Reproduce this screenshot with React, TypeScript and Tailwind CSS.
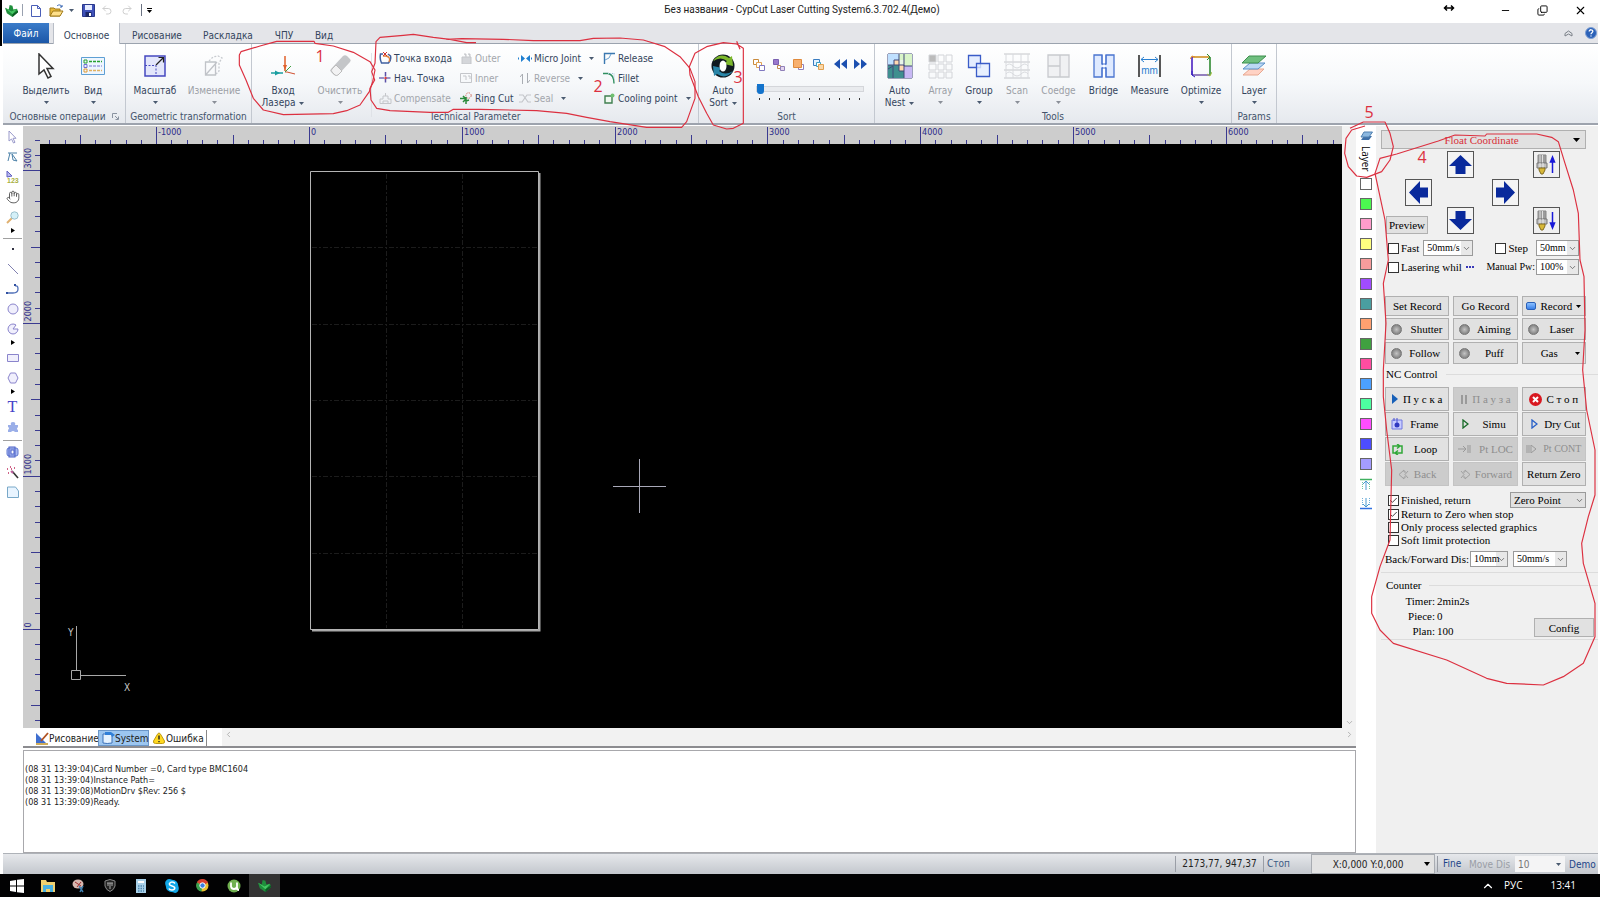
import type { ReactNode } from "react";
import { Check, ChevronDown, ChevronLeft, ChevronRight, ChevronUp, Copy, Minus, Undo2, Redo2, X, Hand } from "lucide-react";

const UI = "font-['DejaVu_Sans_Condensed','DejaVu_Sans',sans-serif]";
const PANEL = "font-['Liberation_Serif',serif]";

function Svg({ w, h, vb, children }: { w: number; h: number; vb?: string; children: ReactNode }) {
  return (
    <svg width={w} height={h} viewBox={vb ?? `0 0 ${w} ${h}`} fill="none" className="shrink-0" aria-hidden="true">
      {children}
    </svg>
  );
}

function Caret({ color = "#4a5a70" }: { color?: string }) {
  return (
    <Svg w={5} h={3}>
      <path d="M0 0h5L2.5 3z" fill={color} />
    </Svg>
  );
}

/* ---------- title bar ---------- */

function AppLogo({ size = 14 }: { size?: number }) {
  return (
    <Svg w={size} h={size} vb="0 0 14 14">
      <path d="M0 4l4 2 1-5 3 1 1 4 4-1 1 4-6 5-6-4z" fill="#1f8f3c" />
      <path d="M0 4l7 4 6-3-5 6z" fill="#46c864" />
      <path d="M8 11l6-4v2l-6 5z" fill="#0b5c22" />
    </Svg>
  );
}

function TitleBar() {
  return (
    <header className="flex h-[23px] shrink-0 items-center bg-white pb-[3px] pl-[2px]">
      <AppLogo size={13} />
      <span className="ml-1 h-3 w-px bg-gray-400" />
      <button aria-label="New" className="ml-2 w-[10px]">
        <Svg w={10} h={13}>
          <path d="M.5 1.5h6l3 3v8h-9z" fill="#fff" stroke="#4a5fb8" />
          <path d="M6.5 1.5v3h3" stroke="#4a5fb8" />
        </Svg>
      </button>
      <button aria-label="Open" className="ml-2 w-[15px]">
        <Svg w={15} h={13}>
          <path d="M1 4h4l1 1h5v7H1z" fill="#e8b93a" stroke="#a07a18" />
          <path d="M1 12l3-5h10l-3 5z" fill="#ffe08a" stroke="#a07a18" />
          <path d="M8 2c2-2 4-1 5 1m0-2v2h-2" stroke="#3060b0" />
        </Svg>
      </button>
      <button aria-label="Open recent" className="ml-[5px]"><Caret /></button>
      <button aria-label="Save" className="ml-2 w-[13px]">
        <Svg w={13} h={13}>
          <path d="M.5.5h12v12h-12z" fill="#3f51b8" stroke="#2a388c" />
          <path d="M3 1h7v5H3z" fill="#e6ecff" />
          <path d="M3.5 8h6v5h-6z" fill="#1c2766" />
          <path d="M7 9h2v3H7z" fill="#fff" />
        </Svg>
      </button>
      <button aria-label="Undo" disabled className="ml-[6px]"><Undo2 size={12} color="#cfcfcf" /></button>
      <button aria-label="Redo" disabled className="ml-2"><Redo2 size={12} color="#cfcfcf" /></button>
      <span className="ml-2 h-3 w-px bg-gray-500" />
      <button aria-label="Customize" className="ml-[5px] flex flex-col items-center gap-px">
        <span className="h-px w-[5px] bg-black" />
        <Caret color="#000" />
      </button>
      <h1 className="flex-1 pr-[48px] text-center font-['Roboto',sans-serif] text-[10px] leading-3 text-[#222]">
        Без названия - CypCut Laser Cutting System6.3.702.4(Демо)
      </h1>
      <div className="flex items-center gap-[26px] pr-[11px] text-black">
        <button aria-label="Minimize"><Minus size={11} strokeWidth={2} /></button>
        <button aria-label="Restore"><Copy size={11} strokeWidth={2} className="-scale-x-100 rotate-180" /></button>
        <button aria-label="Close"><X size={13} strokeWidth={2} /></button>
      </div>
    </header>
  );
}

function MenuTabs() {
  return (
    <nav className={`${UI} flex h-[21px] shrink-0 items-stretch border-b border-[#9ba3ae] bg-[#e4e5e9] text-[10px] text-[#33445c]`}>
      <button className="w-[46px] bg-gradient-to-b from-[#3b7cc9] to-[#1b57a8] text-white">Файл</button>
      <button className="-mb-px ml-1 w-[67px] border-x border-[#b9bec7] bg-white pt-1">Основное</button>
      <button className="ml-2 w-[58px] pt-1">Рисование</button>
      <button className="ml-3 w-[60px] pt-1">Раскладка</button>
      <button className="ml-3 w-7 pt-1">ЧПУ</button>
      <button className="ml-3 w-7 pt-1">Вид</button>
      <div className="ml-auto flex items-center gap-3 pr-px">
        <button aria-label="Collapse ribbon">
          <Svg w={9} h={7}><path d="M1 3.5L4.5 1 8 3.5V6L4.5 4 1 6z" stroke="#7a8088" /></Svg>
        </button>
        <button aria-label="Help">
          <Svg w={12} h={12}>
            <circle cx="6" cy="6" r="5.5" fill="#2c62b8" stroke="#7d9fd4" />
            <path d="M4.2 4.5c0-2.4 3.8-2.2 3.6 0C7.7 5.7 6 5.7 6 7.2M6 8.4v1.2" stroke="#fff" strokeWidth="1.3" />
          </Svg>
        </button>
      </div>
    </nav>
  );
}

/* ---------- ribbon ---------- */

function BigButton({ icon, label, second, width, disabled, caret = true }: {
  icon: ReactNode; label: string; second?: string; width: string; disabled?: boolean; caret?: boolean;
}) {
  return (
    <button disabled={disabled} className={`flex shrink-0 flex-col items-center ${width} ${disabled ? "text-[#9b9fa6]" : "text-[#33445c]"}`}>
      <span className="flex h-[26px] items-center">{icon}</span>
      <span className="mt-[6px] whitespace-nowrap leading-3">{label}</span>
      {second ? (
        <span className="flex items-center gap-1 whitespace-nowrap leading-3">{second}<Caret /></span>
      ) : (
        caret && <span className="mt-1 flex"><Caret color={disabled ? "#8a8f98" : undefined} /></span>
      )}
    </button>
  );
}

function SmallButton({ icon, label, disabled, caret }: { icon: ReactNode; label: string; disabled?: boolean; caret?: boolean }) {
  return (
    <button disabled={disabled} className={`flex h-5 items-center whitespace-nowrap ${disabled ? "text-[#a3a6ac]" : "text-[#33445c]"}`}>
      <span className="mr-[2px] flex w-[14px] justify-center">{icon}</span>
      {label}
      {caret && <span className="ml-2"><Caret /></span>}
    </button>
  );
}

function Group({ label, width, children, corner }: { label: string; width: string; children: ReactNode; corner?: boolean }) {
  return (
    <section aria-label={label} className={`flex shrink-0 flex-col border-r border-[#c3c8d0] ${width}`}>
      <div className="flex h-[66px] items-start pt-[9px]">{children}</div>
      <div className="flex items-center leading-[13px] text-[#43536b]">
        <span className="flex-1 whitespace-nowrap text-center">{label}</span>
        {corner && (
          <button aria-label="More" className="mr-[6px]">
            <Svg w={7} h={7}><path d="M.5 5V.5H5M3 3l3 3M6.5 3.5v3h-3" stroke="#8a93a0" /></Svg>
          </button>
        )}
      </div>
    </section>
  );
}

const squares = (a: string, b: string, c: string) => (
  <Svg w={13} h={13}>
    <path d="M1.5 1.5h5v5h-5z" fill={a} stroke="#c98a3c" />
    <path d="M4.5 4.5h5v5h-5z" fill={b} stroke="#e0a050" />
    <path d="M7.5 7.5h5v5h-5z" fill={c} stroke="#8078c0" />
  </Svg>
);

function SortInnerIcon() {
  return (
    <Svg w={13} h={13}>
      <path d="M1.5 1.5h5v5h-5z" fill="#9a78cc" stroke="#7a60b0" />
      <path d="M5.5 7.5h3v3h-3z" fill="#fff" stroke="#c08a50" />
      <path d="M8.5 8.5h4v4h-4z" fill="#e4d4f0" stroke="#9080b8" />
    </Svg>
  );
}
function FrontIcon() {
  return (
    <Svg w={13} h={13}>
      <path d="M6.5 6.5h5v5h-5z" fill="#fff" stroke="#9080b8" />
      <path d="M1.5 1.5h8v8h-8z" fill="#f7b070" stroke="#e08a3c" />
    </Svg>
  );
}
function BackIcon() {
  return (
    <Svg w={13} h={13}>
      <path d="M1.5 1.5h6v6h-6z" fill="#e4f2ff" stroke="#3a7cc0" />
      <path d="M4.5 4.5h4v4h-4z" fill="#fff" stroke="#40a0c0" />
      <path d="M6.5 6.5h5v5h-5z" fill="#fbd8a8" stroke="#e0a050" />
    </Svg>
  );
}

function Ribbon() {
  const g = "#a9adb3";
  return (
    <div className={`${UI} flex h-[81px] shrink-0 border-b-2 border-[#9da3ad] bg-gradient-to-b from-white via-[#f6f8fa] to-[#e6e9ee] text-[10px]`}>
      <Group label="Основные операции" width="w-[123px]" corner>
        <div className="flex pl-[11px]">
          <BigButton width="w-[64px]" label="Выделить" icon={
            <Svg w={18} h={27}>
              <path d="M2 1v20l5-4 4 8 3-1.5-4-8h6z" fill="#fff" stroke="#333" strokeWidth="1.5" />
            </Svg>} />
          <BigButton width="w-[30px]" label="Вид" icon={
            <Svg w={24} h={18}>
              <path d="M.5.5h23v17H.5z" fill="#eef6ff" stroke="#5d9fd4" />
              <path d="M3 3h3v3H3z" stroke="#2aa030" /><path d="M3 7.5h3v3H3z" stroke="#7070d0" /><path d="M3 12h3v3H3z" stroke="#e09a30" />
              <path d="M8 4.5h13" stroke="#2aa030" strokeDasharray="3 1" strokeWidth="1.5" />
              <path d="M8 9h13" stroke="#a0a0e0" strokeDasharray="3 1" strokeWidth="1.5" />
              <path d="M8 13.5h13" stroke="#e0b060" strokeDasharray="3 1" strokeWidth="1.5" />
            </Svg>} />
        </div>
      </Group>
      <Group label="Geometric transformation" width="w-[126px]">
        <div className="flex gap-1 pl-1">
          <BigButton width="w-[50px]" label="Масштаб" icon={
            <Svg w={22} h={22}>
              <path d="M1 1h20v20H1z" fill="#e3e6fb" stroke="#4648c0" strokeWidth="1.5" />
              <path d="M1 10.5h11V21" stroke="#4648c0" strokeDasharray="2 1.5" />
              <path d="M12 10l7-7M14.5 2.5h5v5" stroke="#222" strokeWidth="1.2" />
            </Svg>} />
          <BigButton width="w-[60px]" label="Изменение" disabled icon={
            <Svg w={20} h={22}>
              <path d="M1.5 7h10v13h-10zM1.5 20L13 7" stroke="#c0c3c8" strokeWidth="1.3" />
              <path d="M5 6l4-4 5-1 4 2-3 5v8l-3 3" stroke="#c8cbd0" strokeDasharray="2 1.5" strokeWidth="1.3" />
            </Svg>} />
        </div>
      </Group>
      <Group label="Technical Parameter" width="w-[447px]">
        <div className="flex h-[64px] gap-[7px] border-r border-[#dfe2e7] pl-[6px] pr-[6px]">
          <BigButton width="w-[50px]" label="Вход" second="Лазера" icon={
            <Svg w={25} h={22}>
              <path d="M14 1v15" stroke="#e0602a" strokeWidth="1.5" /><path d="M12 10l2 5 2-5z" fill="#e0602a" />
              <path d="M0 18h12" stroke="#1a9ea0" strokeWidth="1.5" /><path d="M4 15.5L9 18l-5 2.500z" fill="#1a9ea0" />
              <path d="M14 17h2l8 2" stroke="#d05030" /><path d="M14 17l6-6" stroke="#40a040" />
            </Svg>} />
          <BigButton width="w-[50px]" label="Очистить" disabled icon={
            <Svg w={24} h={24}>
              <path d="M3 15L15 2q2-1.500 4 0l3 3q1.500 1.500 0 3L10 21q-2 1.500-4 0l-3-3q-1.500-1.500 0-3z" fill="#c4c6c9" />
              <path d="M4 15l4-4 6 6-4 4q-2 1-3 0l-3-3q-1.500-1.500 0-3z" fill="#f2f2f3" stroke="#bbb" />
            </Svg>} />
        </div>
        <div className="-mt-[5px] grid grid-cols-[81px_59px_84px_90px] pl-[6px]">
          <SmallButton label="Точка входа" icon={<Svg w={13} h={12}><path d="M4 2H1.500q-1 5 1 9h7q3-3 2-7L9 2" stroke="#4060a0" strokeWidth="1.500" /><path d="M4 4h3q5 1 3 6" stroke="#e0803a" strokeWidth="1.300" /><path d="M4 0l4 4m0-4L4 4" stroke="#d03030" /></Svg>} />
          <SmallButton disabled label="Outer" icon={<Svg w={11} h={11}><path d="M1 4h9v7H1zM3 1h2v3M7 1h2v3" fill="#d4d6da" stroke="#c4c6ca" /></Svg>} />
          <SmallButton caret label="Micro Joint" icon={<Svg w={14} h={7}><path d="M0 3.500h1M13 3.500h1" stroke="#1f7fd0" strokeWidth="2" /><path d="M7 3.500L3 0v7zM8 3.500L12 0v7z" fill="#1f7fd0" /></Svg>} />
          <SmallButton label="Release" icon={<Svg w={12} h={12}><path d="M1.500 12V1.500H12" stroke="#3a78b0" strokeWidth="1.400" /><path d="M2 8q5-1 6-6" stroke="#6aa0d0" /></Svg>} />
          <SmallButton label="Нач. Точка" icon={<Svg w={13} h={12}><path d="M0 6h13" stroke="#7a70b8" strokeWidth="1.500" strokeDasharray="5 1.500" /><path d="M6.500 0v12" stroke="#5b50a8" strokeWidth="1.500" strokeDasharray="4.500 1.500" /><circle cx="6.500" cy="6" r="1.200" fill="#e04040" /></Svg>} />
          <SmallButton disabled label="Inner" icon={<Svg w={12} h={10}><path d="M.5.500h11v9H.500zM3 3h3v4M8 3h2v3" stroke="#c4c6ca" /></Svg>} />
          <SmallButton disabled caret label="Reverse" icon={<Svg w={10} h={11}><path d="M2.500 11V1L0 4M7.500 0v10L10 7" stroke={g} /></Svg>} />
          <SmallButton label="Fillet" icon={<Svg w={12} h={12}><path d="M0 1.500h5q6 1 6 10" stroke="#2f8f5f" strokeWidth="1.400" /><path d="M5 1.500h6v6" stroke="#a8c8d8" strokeDasharray="1 1" /></Svg>} />
          <SmallButton disabled label="Compensate" icon={<Svg w={13} h={11}><path d="M1 10.500V6h3V3h5v3h3v4.500zM4 10V8h5v2M6.500 3V0" stroke="#c4c6ca" /></Svg>} />
          <SmallButton label="Ring Cut" icon={<Svg w={13} h={12}><circle cx="8.500" cy="3.500" r="2.700" stroke="#d07060" strokeDasharray="1.500 1" /><path d="M6 12V5M0 6.500h5M3 4l3 3-3 3M6 9l3-1" stroke="#2a8a3a" strokeWidth="1.500" /></Svg>} />
          <SmallButton disabled caret label="Seal" icon={<Svg w={12} h={9}><path d="M0 1h4l5 7h3M12 1H8L3 8H0" stroke="#c4c6ca" strokeWidth="1.200" /></Svg>} />
          <SmallButton caret label="Cooling point" icon={<Svg w={11} h={11}><path d="M1 3h7v7H1z" fill="#f0f8f0" stroke="#3f7f4f" strokeWidth="1.400" /><circle cx="8.500" cy="2.500" r="2" fill="#6fc070" /></Svg>} />
        </div>
      </Group>
      <Group label="Sort" width="w-[176px]">
        <BigButton width="w-[48px]" label="Auto" second="Sort" icon={
          <Svg w={24} h={24}>
            <circle cx="12" cy="12" r="11.500" fill="#101a20" />
            <path d="M2 7Q9-2 18 4l3-2 1 10-9-2 3-3Q10 2 2 7z" fill="#7cb82c" />
            <path d="M22 17q-7 9-16 3l-3 2-1-10 9 2-3 3q6 5 14 0z" fill="#2a86a8" />
            <ellipse cx="12" cy="12" rx="3.500" ry="5.500" fill="#fff" />
          </Svg>} />
        <div className="ml-[9px] flex flex-col">
          <div className="-ml-1 flex h-[22px] items-center gap-[7px]">
            <button aria-label="Sort outer">{squares("#fff", "#fff", "#fff")}</button>
            <button aria-label="Sort inner"><SortInnerIcon /></button>
            <button aria-label="Bring forward"><FrontIcon /></button>
            <button aria-label="Send back"><BackIcon /></button>
            <button aria-label="Previous" className="ml-[2px]"><Svg w={13} h={10}><path d="M6 0v10L0 5zM13 0v10L7 5z" fill="#1c50b0" /></Svg></button>
            <button aria-label="Next"><Svg w={13} h={10}><path d="M0 0v10l6-5zM7 0v10l6-5z" fill="#1c50b0" /></Svg></button>
          </div>
          <input
            type="range" aria-label="Sort position" min={0} max={100} defaultValue={0}
            className="mt-[9px] h-[10px] w-[108px] appearance-none bg-transparent [&::-webkit-slider-runnable-track]:h-[6px] [&::-webkit-slider-runnable-track]:border [&::-webkit-slider-runnable-track]:border-[#d4d6da] [&::-webkit-slider-runnable-track]:bg-[#e9ebee] [&::-webkit-slider-thumb]:-mt-[3px] [&::-webkit-slider-thumb]:h-[10px] [&::-webkit-slider-thumb]:w-[7px] [&::-webkit-slider-thumb]:appearance-none [&::-webkit-slider-thumb]:rounded-b-[3px] [&::-webkit-slider-thumb]:bg-[#1474cc]"
          />
          <div className="mt-1 flex w-[104px] justify-between pl-[3px]">
            {Array.from({ length: 11 }, (_, i) => <span key={i} className="h-[2px] w-px bg-[#333]" />)}
          </div>
        </div>
      </Group>
      <Group label="Tools" width="w-[357px]">
        <div className="flex pl-1">
          <BigButton width="w-[41px]" label="Auto" second="Nest" icon={
            <Svg w={26} h={26}>
              <path d="M1 1h24v24H1z" fill="#e8f4e8" stroke="#404878" />
              <path d="M1 1h11v6H7v5H1z" fill="#bfe0ff" /><path d="M12 1h13v12h-8V7h-5z" fill="#d8f4c8" />
              <path d="M1 12h11v6h5v7H1z" fill="#3f8f8f" /><path d="M7 7h5v5h5v6h-5v-6H7z" fill="#ffd9b0" />
              <path d="M17 13h8v12h-8z" fill="#c8b8f4" />
              <path d="M1 12h11V7m0 5h5v6h-5m0-6v6m5-17v12h8m-8 5v7M12 1v6H7v5m-6 4l5-3v12" stroke="#404878" />
            </Svg>} />
          <BigButton width="w-[41px]" label="Array" disabled icon={
            <Svg w={25} h={25}><path d="M1 1h7v7H1z" fill="#bbb" /><path d="M1 1h7v7H1zM10 1h6v7h-6zM18 1h6v7h-6zM1 10h7v6H1zM10 10h6v6h-6zM18 10h6v6h-6zM1 18h7v6H1zM10 18h6v6h-6zM18 18h6v6h-6z" stroke="#d2d4d8" /></Svg>} />
          <BigButton width="w-[36px]" label="Group" icon={
            <Svg w={24} h={24}><path d="M1.500 1.500h12v12h-12z" fill="#e4edff" stroke="#3a5cc8" strokeWidth="1.300" /><path d="M9.500 9.500h13v13h-13z" fill="#e4edff" fillOpacity=".8" stroke="#3a5cc8" strokeWidth="1.300" /></Svg>} />
          <BigButton width="w-[40px]" label="Scan" disabled icon={
            <Svg w={26} h={26}><path d="M0 1h26M0 9h26M0 17h26M0 25h26" stroke="#c4c6ca" /><path d="M2 1v24M9 1v24M17 1v24M24 1v24M2 13q3-4 7 0t8 0 7 0M2 21q3-4 7 0t8 0 7 0" stroke="#d8dade" /></Svg>} />
          <BigButton width="w-[43px]" label="Coedge" disabled icon={
            <Svg w={23} h={24}><path d="M1 1h21v22H1zM13 1v22M1 12h12" fill="#f0f1f3" stroke="#c8cace" strokeWidth="1.300" /></Svg>} />
          <BigButton width="w-[47px]" label="Bridge" caret={false} icon={
            <Svg w={22} h={24}><path d="M1 1h8v9h4V1h8v22h-8v-9H9v9H1z" fill="#dfeaff" stroke="#4a74d0" strokeWidth="1.300" /><path d="M11 1v22" stroke="#fff" strokeWidth="2" /><path d="M9 1v9h4V1M9 23v-9h4v9" stroke="#4a74d0" /></Svg>} />
          <BigButton width="w-[45px]" label="Measure" caret={false} icon={
            <Svg w={23} h={24}><path d="M1 1v22M22 1v22" stroke="#222" strokeWidth="1.500" /><path d="M3 5.500h17M6 3L3 5.500 6 8M17 3l3 2.500L17 8" stroke="#2a80d0" /><text x="11.500" y="20" fontSize="10" textAnchor="middle" fill="#2a80d0" fontFamily="Liberation Sans">mm</text></Svg>} />
          <BigButton width="w-[58px]" label="Optimize" icon={
            <Svg w={22} h={24}><path d="M2 3h18" stroke="#d09020" strokeWidth="1.600" /><path d="M20 3v18" stroke="#2f8a30" strokeWidth="1.600" /><path d="M20 21H2" stroke="#7a60b0" strokeWidth="1.600" /><path d="M2 21V3" stroke="#4a20c0" strokeWidth="1.600" /><path d="M0 5l2-3 3 1" stroke="#e09030" /><path d="M17 0l3 3-3 3" stroke="#2f8a30" /><path d="M22 18l-2 4-3-2" stroke="#a0c040" /><path d="M5 23l-3-2v-4" stroke="#3020c0" /></Svg>} />
        </div>
      </Group>
      <Group label="Params" width="w-[45px]">
        <BigButton width="w-[44px]" label="Layer" icon={
          <Svg w={26} h={22}>
            <path d="M2 20l7-6h14l-6 6z" fill="#ffd2c4" stroke="#e8a890" /><path d="M2 14l7-6h15l-7 6z" fill="#bcd8f4" stroke="#5a90c8" />
            <path d="M1 8l7-7h17l-8 7z" fill="#6fbf7f" stroke="#3f8f4f" />
          </Svg>} />
      </Group>
    </div>
  );
}

/* ---------- left tool strip ---------- */

function Tool({ label, children }: { label: string; children: ReactNode }) {
  return <button aria-label={label} className="flex h-5 w-full shrink-0 items-center justify-center">{children}</button>;
}
function Flyout() {
  return <span className="mb-[3px] flex h-[6px] shrink-0 items-center justify-center"><Svg w={4} h={5}><path d="M0 0l4 2.500L0 5z" fill="#000" /></Svg></span>;
}

function ToolStrip() {
  const v = "#8a84cc";
  return (
    <aside className="flex w-5 shrink-0 flex-col bg-white pr-px pt-px">
      <Tool label="Select"><Svg w={9} h={14}><path d="M1 1v10l2.500-2 2 4 1.500-.7-2-4H8z" fill="#fff" stroke="#9a9acb" /></Svg></Tool>
      <Tool label="Edit node"><Svg w={12} h={12}><path d="M1 2h9M3 2q-1 4-2 8M5 3l5 7-4-1z" stroke="#4a80a8" /></Svg></Tool>
      <Tool label="Order"><Svg w={13} h={14}><path d="M1 1l5 5-5 1z" fill="#b8b8f0" stroke="#6060c0" /><text x="1" y="13" fontSize="7" fontWeight="bold" fill="#a8b040" fontFamily="Liberation Sans">123</text></Svg></Tool>
      <Tool label="Pan"><Hand size={14} color="#555" strokeWidth={1.6} /></Tool>
      <Tool label="Zoom"><Svg w={13} h={13}><path d="M1 12l5-5" stroke="#e0b070" strokeWidth="2" /><circle cx="8.500" cy="4.500" r="3.700" fill="#d4f0f8" stroke="#9ac0cc" /></Svg></Tool>
      <Flyout />
      <span className="mt-[2px] h-px w-full shrink-0 bg-[#a0a0a0]" />
      <Tool label="Point"><span className="size-[2px] bg-[#334]" /></Tool>
      <Tool label="Line"><Svg w={12} h={12}><path d="M1 1l10 10" stroke="#8080b0" /></Svg></Tool>
      <Tool label="Polyline"><Svg w={13} h={10}><path d="M1 9h6q5 0 5-4t-3-3" stroke="#5070b8" strokeWidth="1.300" /><path d="M0 8h2v2H0zM8 0h2v2H8z" fill="#3050a0" /></Svg></Tool>
      <Tool label="Circle"><Svg w={12} h={12}><circle cx="6" cy="6" r="5" fill="#f0effc" stroke={v} /></Svg></Tool>
      <Tool label="Arc"><Svg w={12} h={12}><path d="M6 6h5a5 5 0 1 1-2-4z" fill="#f0effc" stroke={v} /></Svg></Tool>
      <Flyout />
      <Tool label="Rectangle"><Svg w={12} h={8}><path d="M.5.500h11v7H.500z" fill="#f0effc" stroke={v} /></Svg></Tool>
      <Tool label="Polygon"><Svg w={12} h={12}><path d="M3.500 1h5L11 6l-2.500 5h-5L1 6z" fill="#f0effc" stroke={v} /></Svg></Tool>
      <Flyout />
      <Tool label="Text"><span className="font-['Liberation_Serif',serif] text-[16px] leading-4 text-[#4440c8]">T</span></Tool>
      <Tool label="Part library"><Svg w={12} h={12}><path d="M1 4h3q-1-3 2-3t2 3h3v2q-2 2 0 3v2H8q-2-2-4 0H1V9q2-2 0-3z" fill="#9aaee8" /></Svg></Tool>
      <span className="mb-px mt-[3px] h-px w-full shrink-0 bg-[#a0a0a0]" />
      <Tool label="Combine"><Svg w={13} h={12}><rect x="1" y="2" width="11" height="8" rx="2" fill="#a8b8f0" stroke="#6078d0" /><rect x="3" y="1" width="6" height="10" stroke="#4a60c8" /><rect x="5" y="4" width="3" height="4" fill="#fff" stroke="#4a60c8" /></Svg></Tool>
      <Tool label="Magic wand"><Svg w={13} h={13}><path d="M6 5l6 7" stroke="#333" strokeWidth="1.600" /><path d="M5 5l2 2" stroke="#c060a0" strokeWidth="2" /><path d="M1 3h1M4 1h1M8 2h1M2 7h1M5 3h1" stroke="#c03060" strokeWidth="1.500" /></Svg></Tool>
      <Tool label="Chamfer"><Svg w={12} h={12}><path d="M.5 1h8l3 4v6.500H.500z" fill="#e8f4ff" stroke="#78a8c8" /></Svg></Tool>
    </aside>
  );
}

/* ---------- drawing area ---------- */

const STEP = 15.28;

function TopRuler() {
  const ticks = Array.from({ length: 86 }, (_, i) => i - 17);
  return (
    <svg width="100%" height="18" className="block shrink-0 bg-[#cdcdcd]" aria-hidden="true">
      {ticks.map((n) => {
        const x = Math.floor(270.5 + n * STEP) - 0.5;
        const top = n % 10 === 0 ? 1 : n % 5 === 0 ? 9 : 14;
        return (
          <g key={n}>
            <path d={`M${x} ${top}V18`} stroke="#3a3a90" />
            {n % 10 === 0 && <text x={x + 1.5} y="9" fontSize="9" fill="#2c2c8a" fontFamily="DejaVu Sans Condensed">{n * 100}</text>}
          </g>
        );
      })}
    </svg>
  );
}

function SideRuler() {
  const ticks = Array.from({ length: 39 }, (_, i) => i - 6);
  return (
    <svg width="17" height="100%" className="block shrink-0 bg-[#cdcdcd]" aria-hidden="true">
      {ticks.map((n) => {
        const y = Math.round(502.5 - n * STEP) + 0.5;
        const left = n % 10 === 0 ? 0 : n % 5 === 0 ? 8 : 12;
        return (
          <g key={n}>
            <path d={`M${left} ${y}H17`} stroke="#3a3a90" />
            {n % 10 === 0 && <text transform={`translate(8 ${y - 2}) rotate(-90)`} fontSize="9" fill="#2c2c8a" fontFamily="DejaVu Sans Condensed">{n * 100}</text>}
          </g>
        );
      })}
    </svg>
  );
}

function Drawing() {
  return (
    <svg className="block min-h-0 w-full flex-1 bg-black" role="img" aria-label="Drawing area">
      <path d="M499.500 29V486.500H272" stroke="#a8a8a8" strokeWidth="2" fill="none" />
      <path d="M270.500 27.500H498.500V485.500H270.500z" fill="#000" stroke="#b4b4b4" />
      <path d="M346.500 30V484M422.500 30V484M272 103.500H497M272 180.500H497M272 256.500H497M272 332.500H497M272 409.500H497" stroke="#1c1c1c" strokeDasharray="5 2 2 2" />
      <path d="M573 342.500H626M599.500 315V369" stroke="#a8a8b8" />
      <path d="M36.500 482V526M41 531.500H86M31.500 526.500h9v9h-9z" stroke="#a8a8a8" fill="none" />
      <text x="28" y="492" fontSize="10" fill="#c8c8c8" fontFamily="DejaVu Sans Condensed">Y</text>
      <text x="84" y="547" fontSize="10" fill="#c8c8c8" fontFamily="DejaVu Sans Condensed">X</text>
    </svg>
  );
}

const LOG = [
  "(08 31 13:39:04)Card Number =0, Card type BMC1604",
  "(08 31 13:39:04)Instance Path=",
  "(08 31 13:39:08)MotionDrv $Rev: 256 $",
  "(08 31 13:39:09)Ready.",
];

function Workspace() {
  return (
    <main className="flex min-w-0 flex-1 flex-col">
      <div className="flex min-h-0 flex-1">
        <SideRuler />
        <div className="flex min-w-0 flex-1 flex-col">
          <TopRuler />
          <Drawing />
        </div>
        <div className="flex w-[14px] shrink-0 flex-col justify-end bg-[#f2f2f2] pb-px">
          <button aria-label="Scroll down" className="flex justify-center"><ChevronDown size={9} color="#a0a0a0" /></button>
        </div>
      </div>
      <div className={`${UI} flex h-5 shrink-0 border-b-2 border-[#8c8c90] bg-white text-[10px] text-[#222]`}>
        <div role="tablist" className="flex w-[199px] shrink-0 pt-[2px]">
          <button role="tab" className="flex w-[75px] items-center pl-3">
            <Svg w={14} h={13}><path d="M1 1v10h10z" fill="#3f6fd0" /><path d="M1 12h12" stroke="#c09020" strokeWidth="1.500" /><path d="M6 9l7-8" stroke="#b05020" strokeWidth="1.800" /></Svg>
            Рисование
          </button>
          <button role="tab" aria-selected="true" className="flex w-[51px] items-center border border-[#6a96c8] bg-[#9cc6f0] pl-[3px]">
            <Svg w={13} h={12}><path d="M1 2h9v9q-5 1-9 0z" fill="#e4f2ff" stroke="#3a70b8" /><path d="M3 0h6l4 3-3 2-1-2H3z" fill="#2f7fd8" /></Svg>
            System
          </button>
          <button role="tab" className="flex w-[58px] items-center gap-px border-r border-[#888] pl-1">
            <Svg w={12} h={12}><path d="M6 1q1 0 2 2l3.500 6q.5 2.500-2 2.500h-7Q0 11.500.5 9L4 3q1-2 2-2z" fill="#ffd820" stroke="#c09a10" /><path d="M6 3.500v4M6 9v1.300" stroke="#222" strokeWidth="1.400" /></Svg>
            Ошибка
          </button>
        </div>
        <div className="flex flex-1 items-start justify-between bg-[#f2f2f2] px-[2px] pt-[2px]">
          <button aria-label="Scroll left"><ChevronLeft size={9} color="#a0a0a0" /></button>
          <button aria-label="Scroll right"><ChevronRight size={9} color="#a0a0a0" /></button>
        </div>
      </div>
      <div className={`${UI} mt-[2px] h-[103px] shrink-0 border border-[#a8a8ac] bg-white pl-px pt-[13px] text-[9px] leading-[11px] text-[#222]`}>
        {LOG.map((line) => <p key={line}>{line}</p>)}
      </div>
    </main>
  );
}

/* ---------- layer strip ---------- */

const LAYERS = [
  "bg-white", "bg-[#4cf850]", "bg-[#ff9ccc]", "bg-[#ffff80]", "bg-[#f79c9c]", "bg-[#a04cff]", "bg-[#4a9ea0]", "bg-[#ffa070]",
  "bg-[#40a040]", "bg-[#ff4da0]", "bg-[#4ca0ff]", "bg-[#4dffa0]", "bg-[#ff4dff]", "bg-[#4d4dff]", "bg-[#a49cff]",
];

function LayerStrip() {
  return (
    <aside className="flex w-5 shrink-0 flex-col items-center bg-white">
      <button className="flex h-[48px] flex-col items-center gap-[5px] pt-1">
        <Svg w={13} h={11}><path d="M1 10l3-4h8l-3 4z" fill="#3f70a8" /><path d="M1 7l3-5h8.500L9 7z" fill="#8cb8e0" stroke="#5080b0" /></Svg>
        <span className="font-['Open_Sans',sans-serif] text-[10px] leading-3 text-black [writing-mode:vertical-rl]">Layer</span>
      </button>
      {LAYERS.map((c, i) => (
        <button key={c} aria-label={`Layer ${i}`} className="flex h-5 shrink-0 items-center">
          <span className={`size-3 border border-[#666] ${c}`} />
        </button>
      ))}
      <button aria-label="To top" className="flex h-5 shrink-0 items-center"><Svg w={12} h={12}><path d="M0 1.500h12" stroke="#40b060" strokeWidth="1.500" /><path d="M6 12V3M3 6l3-3 3 3" stroke="#4a9ad0" /><path d="M2.500 4v8M9.500 4v8" stroke="#70c8a0" strokeDasharray="1 1" /></Svg></button>
      <button aria-label="To bottom" className="flex h-5 shrink-0 items-center"><Svg w={12} h={12}><path d="M0 10.500h12" stroke="#3070e0" strokeWidth="1.500" /><path d="M6 0v9M3 6l3 3 3-3" stroke="#4a9ad0" /><path d="M2.500 0v8M9.500 0v8" stroke="#70b0d8" strokeDasharray="1 1" /></Svg></button>
    </aside>
  );
}

/* ---------- control panel ---------- */

const BTN = "border border-[#b0b0b0] bg-[#e1e1e1]";

function Cell({ children, h, disabled }: { children: ReactNode; h: string; disabled?: boolean }) {
  return (
    <button disabled={disabled} className={`flex items-center justify-center whitespace-nowrap border ${h} ${disabled ? "border-[#c4c4c4] bg-[#cccccc] text-[#8e8e8e]" : "border-[#b0b0b0] bg-[#e1e1e1] text-black"}`}>
      {children}
    </button>
  );
}

function Lamp() {
  return <span className="mr-auto ml-[5px] size-[11px] shrink-0 rounded-full border border-[#777] bg-radial from-[#c4c4c4] to-[#6c6c6c]" />;
}

function Combo({ value, width, label, plain }: { value: string; width: string; label: string; plain?: boolean }) {
  return (
    <span className={`grid h-4 items-center border border-[#9a9a9a] ${width} ${plain ? "bg-[#e1e1e1] text-[11px]" : "bg-white text-[10px]"}`}>
      <span className={`pointer-events-none col-start-1 row-start-1 flex h-full w-[11px] items-center justify-center justify-self-end ${plain ? "" : "bg-[#e8e8e8]"}`}>
        <ChevronDown size={9} color="#555" />
      </span>
      <select aria-label={label} className="z-10 col-start-1 row-start-1 w-full appearance-none bg-transparent pl-[3px] leading-[14px] outline-none">
        <option>{value}</option>
      </select>
    </span>
  );
}

function Tick({ label, checked }: { label: string; checked?: boolean }) {
  return (
    <label className="flex items-center gap-[2px] whitespace-nowrap">
      <span className="grid shrink-0 place-items-center">
        <input type="checkbox" defaultChecked={checked} className="col-start-1 row-start-1 size-[11px] appearance-none border border-[#333] bg-white" />
        {checked && <Check size={9} strokeWidth={2} className="pointer-events-none col-start-1 row-start-1" />}
      </span>
      {label}
    </label>
  );
}

function Arrow({ label, turn, place }: { label: string; turn: string; place: string }) {
  return (
    <button aria-label={label} className={`flex size-[27px] items-center justify-center border border-[#555] bg-[#f4f4f4] ${place}`}>
      <svg width="23" height="19" viewBox="0 0 23 19" className={turn} aria-hidden="true"><path d="M11.500 0L23 11h-6.500v8h-10v-8H0z" fill="#0a2a9c" /></svg>
    </button>
  );
}

function Nozzle({ up, place }: { up?: boolean; place: string }) {
  return (
    <button aria-label={up ? "Head up" : "Head down"} className={`flex size-[27px] items-center justify-center border border-[#555] bg-[#f0f0f0] ${place}`}>
      <Svg w={21} h={22}>
        <path d="M2 1h8v8H2z" fill="#9c9c9c" stroke="#888" /><path d="M4 1v8M6.500 1v8" stroke="#e0e0e0" />
        <path d="M1 9h10v5H1z" fill="#c0c0c0" stroke="#777" /><path d="M4 9v5M7 9v5" stroke="#eee" /><path d="M3 14h6v2l-2 4H5l-2-4z" fill="#d8b838" stroke="#806a20" />
        {up ? <path d="M16.500 19V5M14.500 8l2-5 2 5z" stroke="#1818d8" strokeWidth="1.500" fill="#1818d8" /> : <path d="M16.500 2v14M14.500 13l2 5 2-5z" stroke="#1818d8" strokeWidth="1.500" fill="#1818d8" />}
      </Svg>
    </button>
  );
}

function ControlPanel() {
  const cell = "h-6";
  return (
    <aside className={`${PANEL} flex w-[222px] shrink-0 flex-col bg-[#f0f0f0] pl-[5px] pt-1 text-[11px] leading-3 text-black`}>
      <button className={`${BTN} mr-[12px] flex h-[19px] items-center pr-[5px] text-[#d83038]`}>
        <span className="flex-1 pl-2 text-center">Float Coordinate</span>
        <Svg w={7} h={4}><path d="M0 0h7L3.500 4z" fill="#000" /></Svg>
      </button>

      <div className="mt-[2px] grid grid-cols-[19px_27px_15px_27px_18px_27px_14px_27px] grid-rows-3 gap-y-px pl-[5px]">
        <Arrow label="Up" turn="" place="col-start-4 row-start-1" />
        <Arrow label="Left" turn="-rotate-90" place="col-start-2 row-start-2" />
        <Arrow label="Right" turn="rotate-90" place="col-start-6 row-start-2" />
        <Arrow label="Down" turn="rotate-180" place="col-start-4 row-start-3" />
        <Nozzle up place="col-start-8 row-start-1" />
        <Nozzle place="col-start-8 row-start-3" />
        <button className={`${BTN} col-span-2 col-start-1 row-start-3 mr-1 h-[18px] self-end`}>Preview</button>
      </div>

      <div className="mt-[6px] flex h-4 items-center pl-[7px] pr-[19px]">
        <Tick label="Fast" />
        <span className="ml-1"><Combo label="Fast speed" value="50mm/s" width="w-[50px]" /></span>
        <span className="ml-auto mr-2"><Tick label="Step" /></span>
        <Combo label="Step distance" value="50mm" width="w-[43px]" />
      </div>
      <div className="mt-[3px] flex h-4 items-center pl-[7px] pr-[19px]">
        <Tick label="Lasering whil" />
        <span className="ml-1 flex gap-px"><i className="size-[2px] bg-[#3838b8]" /><i className="size-[2px] bg-[#3838b8]" /><i className="size-[2px] bg-[#3838b8]" /></span>
        <span className="ml-auto mr-px whitespace-nowrap text-[10px]">Manual Pw:</span>
        <Combo label="Manual power" value="100%" width="w-[43px]" />
      </div>

      <div className="mt-[21px] grid grid-cols-3 gap-x-[4px] gap-y-[2px] pl-1 pr-[12px]">
        <Cell h="h-5">Set Record</Cell>
        <Cell h="h-5">Go Record</Cell>
        <Cell h="h-5">
          <span className="mr-1 h-2 w-[10px] rounded-[2px] border border-[#2a60b8] bg-gradient-to-b from-[#8cc0ff] to-[#3a80e8]" />
          Record
          <span className="ml-1"><Caret color="#000" /></span>
        </Cell>
        <Cell h="h-[22px]"><Lamp /><span className="mr-[6px]">Shutter</span></Cell>
        <Cell h="h-[22px]"><Lamp /><span className="mr-[6px]">Aiming</span></Cell>
        <Cell h="h-[22px]"><Lamp /><span className="mr-[11px]">Laser</span></Cell>
        <Cell h="h-[22px]"><Lamp /><span className="mr-[8px]">Follow</span></Cell>
        <Cell h="h-[22px]"><Lamp /><span className="mr-[13px]">Puff</span></Cell>
        <Cell h="h-[22px]"><span className="ml-[18px] mr-auto">Gas</span><span className="mr-[5px]"><Caret color="#000" /></span></Cell>
      </div>

      <div className="mt-[4px] flex items-center gap-2 pl-[5px]">NC Control<span className="h-px flex-1 bg-[#dcdcdc]" /></div>

      <div className="mt-[7px] grid grid-cols-3 gap-x-[4px] gap-y-px pl-1 pr-[12px]">
        <Cell h={cell}>
          <span className="mr-[5px]"><Svg w={6} h={10}><path d="M0 0l6 5-6 5z" fill="#1860b8" /></Svg></span>
          П у с к а
        </Cell>
        <Cell h={cell} disabled>
          <span className="mr-1"><Svg w={8} h={9}><path d="M1 0h2v9H1zM5 0h2v9H5z" fill="#9a9a9a" /></Svg></span>
          П а у з а
        </Cell>
        <Cell h={cell}>
          <span className="mr-1"><Svg w={13} h={13}><circle cx="6.500" cy="6.500" r="6.500" fill="#d81820" /><path d="M4 4l5 5M9 4L4 9" stroke="#fff" strokeWidth="2" /></Svg></span>
          С т о п
        </Cell>
        <Cell h={cell}><span className="ml-[5px] mr-auto"><Svg w={12} h={12}><path d="M1 2h10v9H1z" fill="#c8ccff" stroke="#7078e0" /><circle cx="6" cy="7" r="2.500" fill="#3038c0" /><path d="M3 0v3M6 0v5" stroke="#4850d0" /></Svg></span><span className="mr-[10px]">Frame</span></Cell>
        <Cell h={cell}><span className="ml-2 mr-auto"><Svg w={7} h={10}><path d="M1 1l5 4-5 4z" stroke="#186a28" strokeWidth="1.300" /></Svg></span><span className="mr-[11px]">Simu</span></Cell>
        <Cell h={cell}><span className="ml-2 mr-auto"><Svg w={7} h={10}><path d="M1 1l5 4-5 4z" stroke="#2860c8" strokeWidth="1.300" /></Svg></span><span className="mr-[5px]">Dry Cut</span></Cell>
        <Cell h={cell}><span className="ml-[5px] mr-auto"><Svg w={13} h={11}><path d="M8 2H2v7h3M5 9h6V2H9M6 0l3 2-3 2.500M7 6.500L4 9l3 2" stroke="#30a838" strokeWidth="1.500" /></Svg></span><span className="mr-[11px]">Loop</span></Cell>
        <Cell h={cell} disabled><span className="mr-2"><Svg w={13} h={8}><path d="M0 4h7M5 1l3 3-3 3M10 0v8M12 0v8" stroke="#999" /></Svg></span>Pt LOC</Cell>
        <Cell h={cell} disabled><span className="mr-[6px]"><Svg w={11} h={8}><path d="M1 0v8M3 0v8" stroke="#999" /><path d="M5 0l5 4-5 4z" stroke="#999" /></Svg></span><span className="text-[10px]">Pt CONT</span></Cell>
        <Cell h={cell} disabled><span className="mr-1"><Svg w={12} h={11}><path d="M6 1L1 5.500 6 10V8h2M6 1v2h2M10 2L7 5.500 10 9" stroke="#a0a0a0" /></Svg></span>Back</Cell>
        <Cell h={cell} disabled><span className="mr-1"><Svg w={12} h={11}><path d="M6 1l5 4.500L6 10V8H4M6 1v2H4M2 2l3 3.500L2 9" stroke="#a0a0a0" /></Svg></span>Forward</Cell>
        <Cell h={cell}>Return Zero</Cell>
      </div>

      <div className="mt-[6px] flex h-4 items-center justify-between pl-[7px] pr-[12px]">
        <Tick label="Finished, return" checked />
        <Combo plain label="Return position" value="Zero Point" width="w-[76px]" />
      </div>
      <div className="flex flex-col gap-px pl-[7px]">
        <Tick label="Return to Zero when stop" checked />
        <Tick label="Only process selected graphics" />
        <Tick label="Soft limit protection" />
      </div>

      <div className="mt-[5px] flex h-4 items-center pl-1">
        <span className="w-[85px] whitespace-nowrap">Back/Forward Dis:</span>
        <Combo label="Distance" value="10mm" width="w-[38px]" />
        <span className="ml-[5px]"><Combo label="Back/Forward speed" value="50mm/s" width="w-[54px]" /></span>
      </div>

      <div className="mt-[5px] border-t border-[#dcdcdc] pt-[6px]">
        <div className="flex items-center gap-2 pl-[5px]">Counter<span className="h-px flex-1 bg-[#dcdcdc]" /></div>
        <div className="flex items-start justify-between border-b border-[#dcdcdc] pl-[20px] pr-1 pt-[3px]">
          <dl className="grid grid-cols-[34px_auto] gap-x-[2px] leading-[15px]">
            <dt className="text-right">Timer:</dt><dd>2min2s</dd>
            <dt className="text-right">Piece:</dt><dd>0</dd>
            <dt className="text-right">Plan:</dt><dd>100</dd>
          </dl>
          <button className={`${BTN} mb-[2px] h-[19px] w-[60px] self-end`}>Config</button>
        </div>
      </div>
    </aside>
  );
}

/* ---------- status bar and taskbar ---------- */

function StatusBar() {
  return (
    <footer className={`${UI} flex h-[21px] shrink-0 items-center justify-end border-t border-[#aeb2b8] bg-gradient-to-b from-[#e6e8eb] to-[#c3c7cd] text-[10px] text-[#222]`}>
      <span className="w-[88px] border-l border-[#9a9ea6] text-center leading-4">2173,77, 947,37</span>
      <span className="w-[48px] border-l border-[#9a9ea6] pl-[3px] leading-4 text-[#3c5a84]">Стоп</span>
      <button className="flex h-5 w-[124px] items-center border border-[#a8acb2] bg-[#e3e3e3] pr-1">
        <span className="flex-1 text-center">X:0,000 Y:0,000</span>
        <Svg w={6} h={4}><path d="M0 0h6L3 4z" fill="#000" /></Svg>
      </button>
      <span className="ml-[2px] w-[32px] border-l border-[#9a9ea6] pl-[5px] leading-4 text-[#1c4488]">Fine</span>
      <label htmlFor="move" className="w-[46px] whitespace-nowrap text-[#9a9ea6]">Move Dis</label>
      <span className="grid h-4 w-[50px] items-center bg-[#f4f4f5] text-[#777]">
        <select id="move" className="col-start-1 row-start-1 appearance-none bg-transparent pl-[3px]"><option>10</option></select>
        <span className="pointer-events-none col-start-1 row-start-1 mr-1 justify-self-end"><Caret /></span>
      </span>
      <span className="w-[33px] pl-1 text-[#1c4488]">Demo</span>
    </footer>
  );
}

function Task({ label, active, children }: { label: string; active?: boolean; children: ReactNode }) {
  return <button aria-label={label} className={`flex h-full w-[31px] items-center justify-center ${active ? "bg-[#333]" : ""}`}>{children}</button>;
}

function Taskbar() {
  return (
    <footer className="flex h-[23px] shrink-0 items-center bg-[#020203] pl-px font-['Open_Sans',sans-serif] text-[10px] text-white">
      <Task label="Start"><Svg w={14} h={14}><path d="M0 2l6-1v5.500H0zM7 .8L14 0v6.500H7zM0 7.500h6V13l-6-1zM7 7.500h7V14l-7-.8z" fill="#fff" /></Svg></Task>
      <Task label="Explorer"><Svg w={14} h={13}><path d="M0 1h5l1 2h8v10H0z" fill="#f0d070" /><path d="M2 6h10v7H9v-3H5v3H2z" fill="#4ab0e0" /></Svg></Task>
      <Task label="Snipping tool"><Svg w={14} h={14}><ellipse cx="6" cy="5" rx="5.500" ry="4.500" fill="#d8b8b0" /><path d="M3 3l6 4M9 3L5 8" stroke="#a03030" /><path d="M7 7l4 6M11 7l-3 6" stroke="#4080b0" strokeWidth="1.500" /></Svg></Task>
      <Task label="Game"><Svg w={12} h={13}><path d="M1 2l5-1.500L11 2v5q-1 4-5 5.500Q2 11 1 7z" fill="#222" stroke="#888" /><path d="M3 4h6M6 4v6M4 4v3M8 4v3" stroke="#aaa" /></Svg></Task>
      <Task label="Calculator"><Svg w={10} h={14}><path d="M0 0h10v14H0z" fill="#a8d0e8" /><path d="M2 2h6v2H2z" fill="#fff" /><path d="M2 7h6M2 9.500h6M2 12h6" stroke="#5088b0" strokeDasharray="1.500 1" strokeWidth="1.500" /></Svg></Task>
      <Task label="Skype"><Svg w={14} h={14}><path d="M4 0q2 0 3 .7Q13 1 13.300 7q1.200 3-.5 5.500T8 13.300Q1 13 .8 7-.5 4 .8 2T4 0z" fill="#12a8e8" /><path d="M10 4.500Q9 3 7 3T4.300 5Q4.500 6.500 7 7t2.800 2Q9.500 11 7 11T4 9.500" stroke="#fff" strokeWidth="1.600" /></Svg></Task>
      <Task label="Chrome"><Svg w={13} h={13}><circle cx="6.500" cy="6.500" r="6" fill="#e8c030" /><path d="M6.500 6.500L1 3.500A6 6 0 0 1 12 3.800z" fill="#d84030" /><path d="M6.500 6.500L1 3.500a6 6 0 0 0 4.500 9z" fill="#38a050" /><circle cx="6.500" cy="6.500" r="2.700" fill="#3a80e0" stroke="#fff" /></Svg></Task>
      <Task label="uTorrent"><Svg w={14} h={14}><circle cx="7" cy="7" r="6.500" fill="#70b050" /><path d="M4 3.500v4Q4.500 10 7 10t3-2.500v-4M10 8q0 3 2 3" stroke="#fff" strokeWidth="1.800" /></Svg></Task>
      <Task label="CypCut" active><AppLogo size={13} /></Task>
      <div className="ml-auto flex items-center pr-[24px]">
        <button aria-label="Tray"><ChevronUp size={14} /></button>
        <span className="ml-[9px]">РУС</span>
        <time className="ml-[28px]">13:41</time>
      </div>
    </footer>
  );
}

/* ---------- red markup over the window ---------- */

function Markup() {
  return (
    <svg viewBox="0 0 1600 897" preserveAspectRatio="none" className="pointer-events-none absolute inset-0 z-20 h-full w-full" aria-hidden="true">
      <g fill="none" stroke="#dc3040" strokeWidth="3.500" strokeLinejoin="round">
        <path transform="scale(.33333)" d="M723 155L780 138 830 124H942L945 130 1000 138 1060 157 1110 185 1125 210 1118 245 1108 275 1080 315 1040 332 1000 341 850 344 790 330 760 295 738 240 718 195V165z" />
        <path transform="translate(370 0) scale(.33333)" d="M318 128L290 128 240 118 190 112 130 103 100 106 30 112 18 125 15 190 5 215 14 240 0 265 3 300 20 325 60 332 180 337H235L250 328H330L500 332 590 340 650 352 720 365 830 382H935L950 365 975 295V245L960 205 930 170 885 140 820 120 750 114 670 115 630 122H490L400 118 275 116 230 118" />
        <path transform="translate(370 0) scale(.33333)" d="M985 290L960 225 958 200 975 160 1010 140 1060 128 1100 132 1120 145V370L1090 385 1070 387 1030 375 1010 340zM1100 124l10 24" />
        <path transform="translate(1160 0) scale(.33333)" d="M570 385L610 366H675L690 400 700 440 690 480 665 515 620 532 590 528 565 500 554 460 558 415 575 390 615 378" />
        <path transform="translate(1330 110) scale(.33333)" d="M325 93L375 75 465 78 470 72H620L665 82 685 95 705 160 730 240 745 310 750 450 762 500 765 660 758 780 770 900 795 1020V1155L775 1220 755 1300 760 1360 795 1480V1580L760 1660 700 1700 640 1725 530 1720 470 1705 350 1650 190 1600 150 1560 125 1510V1460L150 1370 180 1290 185 1080 170 960 160 860V780L168 640 160 520 175 450 165 330 150 260 135 190 150 145 200 132z" />
      </g>
      <g fill="#dc3040" fontSize="16" fontFamily="Open Sans" textAnchor="middle">
        <text x="320" y="62">1</text>
        <text x="598" y="92">2</text>
        <text x="738" y="83">3</text>
        <text x="1422" y="163">4</text>
        <text x="1369" y="118">5</text>
      </g>
      <path d="M1444.500 8h9M1447 5.500L1444.500 8l2.500 2.500M1451 5.500l2.500 2.500-2.500 2.500" stroke="#000" strokeWidth="1.500" fill="none" />
    </svg>
  );
}

export default function App() {
  return (
    <div className="relative flex h-screen w-full flex-col overflow-hidden bg-white">
      <div className="flex min-h-0 flex-1 flex-col border-r-2 border-white bg-white pl-[3px]">
        <TitleBar />
        <MenuTabs />
        <Ribbon />
        <div className="flex min-h-0 flex-1 pt-px">
          <ToolStrip />
          <Workspace />
          <LayerStrip />
          <ControlPanel />
        </div>
        <StatusBar />
      </div>
      <Taskbar />
      <span className="absolute left-0 top-0 h-[46px] w-[2px] bg-black" />
      <Markup />
    </div>
  );
}
